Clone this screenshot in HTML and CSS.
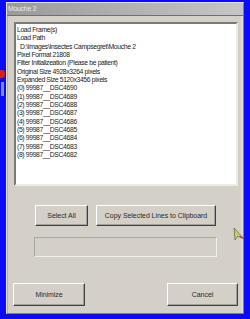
FILE: index.html
```html
<html>
    <head>
        <meta charset="utf-8">
        <link rel="stylesheet" href="styles.css">
    </head>
    <body>
        <div class="desk-icon"></div>
        <div class="desk-label"></div>
        <div class="window">
            <div class="titlebar">Mouche 2</div>
            <div class="content">
                <div class="listbox">
                    <div>Load Frame(s)</div>
                    <div>Load Path</div>
                    <div>&nbsp;&nbsp;D:\Images\Insectes Campsegret\Mouche 2</div>
                    <div>Pixel Format 21808</div>
                    <div>Filter Initializeation (Please be patient)</div>
                    <div>Original Size 4928x3264 pixels</div>
                    <div>Expanded Size 5120x3456 pixels</div>
                    <div>(0) 99987__DSC4690</div>
                    <div>(1) 99987__DSC4689</div>
                    <div>(2) 99987__DSC4688</div>
                    <div>(3) 99987__DSC4687</div>
                    <div>(4) 99987__DSC4686</div>
                    <div>(5) 99987__DSC4685</div>
                    <div>(6) 99987__DSC4684</div>
                    <div>(7) 99987__DSC4683</div>
                    <div>(8) 99987__DSC4682</div>
                </div>
                <div class="row actions">
                    <div class="btn select-all">Select All</div>
                    <div class="btn copy">Copy Selected Lines to Clipboard</div>
                </div>
                <div class="editbox"></div>
                <div class="row footer">
                    <div class="btn minimize">Minimize</div>
                    <div class="btn cancel">Cancel</div>
                </div>
            </div>
        </div>
        <svg class="cursor" width="12" height="14" viewBox="0 0 12 14">
            <polygon points="1,1 2,13 5,9 11,12" fill="#c8cc70" stroke="#6a7040" stroke-width="0.8"/>
            <polygon points="6,10 11,12 8,9" fill="#c04020"/>
        </svg>
    </body>
</html>
```

FILE: styles.css
```css
body {
    margin: 0;
    width: 250px;
    height: 319px;
    background-color: #0b0bf5;
    font-family: "Liberation Sans", Arial, sans-serif;
    overflow: hidden;
}
.desk-icon {
    position: absolute;
    left: 0;
    top: 70px;
    width: 5px;
    height: 8px;
    background-color: #d82010;
    border-radius: 0 3px 3px 0;
}
.desk-label {
    position: absolute;
    left: 1px;
    top: 82px;
    width: 3px;
    height: 14px;
    background-color: #7a8cf0;
}
.window {
    margin-left: 6px;
    margin-top: 2px;
    width: 238px;
    height: 312px;
    box-sizing: border-box;
    background-color: #d4d0c8;
    border-top: 1px solid #e6e4e0;
    border-left: 1px solid #e6e4e0;
    border-right: 1px solid #808080;
    border-bottom: 1px solid #808080;
    box-shadow: inset 1px 0 0 #b0aea8, inset -2px 0 0 #dedbd4;
    display: flex;
    flex-direction: column;
}
.titlebar {
    height: 12px;
    border-bottom: 1px solid #707070;
    background: linear-gradient(to right, #9a9a9a, #c6c6c6);
    color: #ececec;
    font-size: 6.8px;
    letter-spacing: -0.2px;
    line-height: 12px;
    padding-left: 1px;
}
.content {
    padding: 6px 5px 0 7px;
    display: flex;
    flex-direction: column;
}
.listbox {
    height: 164px;
    box-sizing: border-box;
    background-color: #fff;
    border-top: 2px solid #7a7a7a;
    border-left: 2px solid #7a7a7a;
    border-right: 2px solid #ecebe8;
    border-bottom: 2px solid #ecebe8;
    padding: 2px 0 0 1px;
    font-size: 6.8px;
    letter-spacing: -0.35px;
    line-height: 8.33px;
    color: #222;
    white-space: nowrap;
    overflow: hidden;
}
.row {
    display: flex;
}
.actions {
    margin-top: 19px;
    margin-left: 21px;
    gap: 8px;
}
.btn {
    box-sizing: border-box;
    display: flex;
    align-items: center;
    justify-content: center;
    background-color: #d4d0c8;
    border-top: 1px solid #fff;
    border-left: 1px solid #fff;
    border-right: 1px solid #404040;
    border-bottom: 1px solid #404040;
    box-shadow: inset -1px -1px 0 #a0a0a0;
    font-size: 7px;
    letter-spacing: -0.05px;
    color: #2a2a2a;
}
.select-all {
    width: 53px;
    height: 21px;
}
.copy {
    width: 120px;
    height: 21px;
}
.editbox {
    margin-top: 11px;
    margin-left: 20px;
    width: 183px;
    height: 20px;
    box-sizing: border-box;
    border-top: 1px solid #a8a6a0;
    border-left: 1px solid #a8a6a0;
    border-right: 1px solid #f0efec;
    border-bottom: 1px solid #f0efec;
}
.footer {
    margin-top: 26px;
    margin-left: -1px;
    justify-content: space-between;
}
.minimize {
    width: 72px;
    height: 23px;
}
.cancel {
    width: 71px;
    height: 23px;
}
.cursor {
    position: absolute;
    left: 233px;
    top: 227px;
}
```
